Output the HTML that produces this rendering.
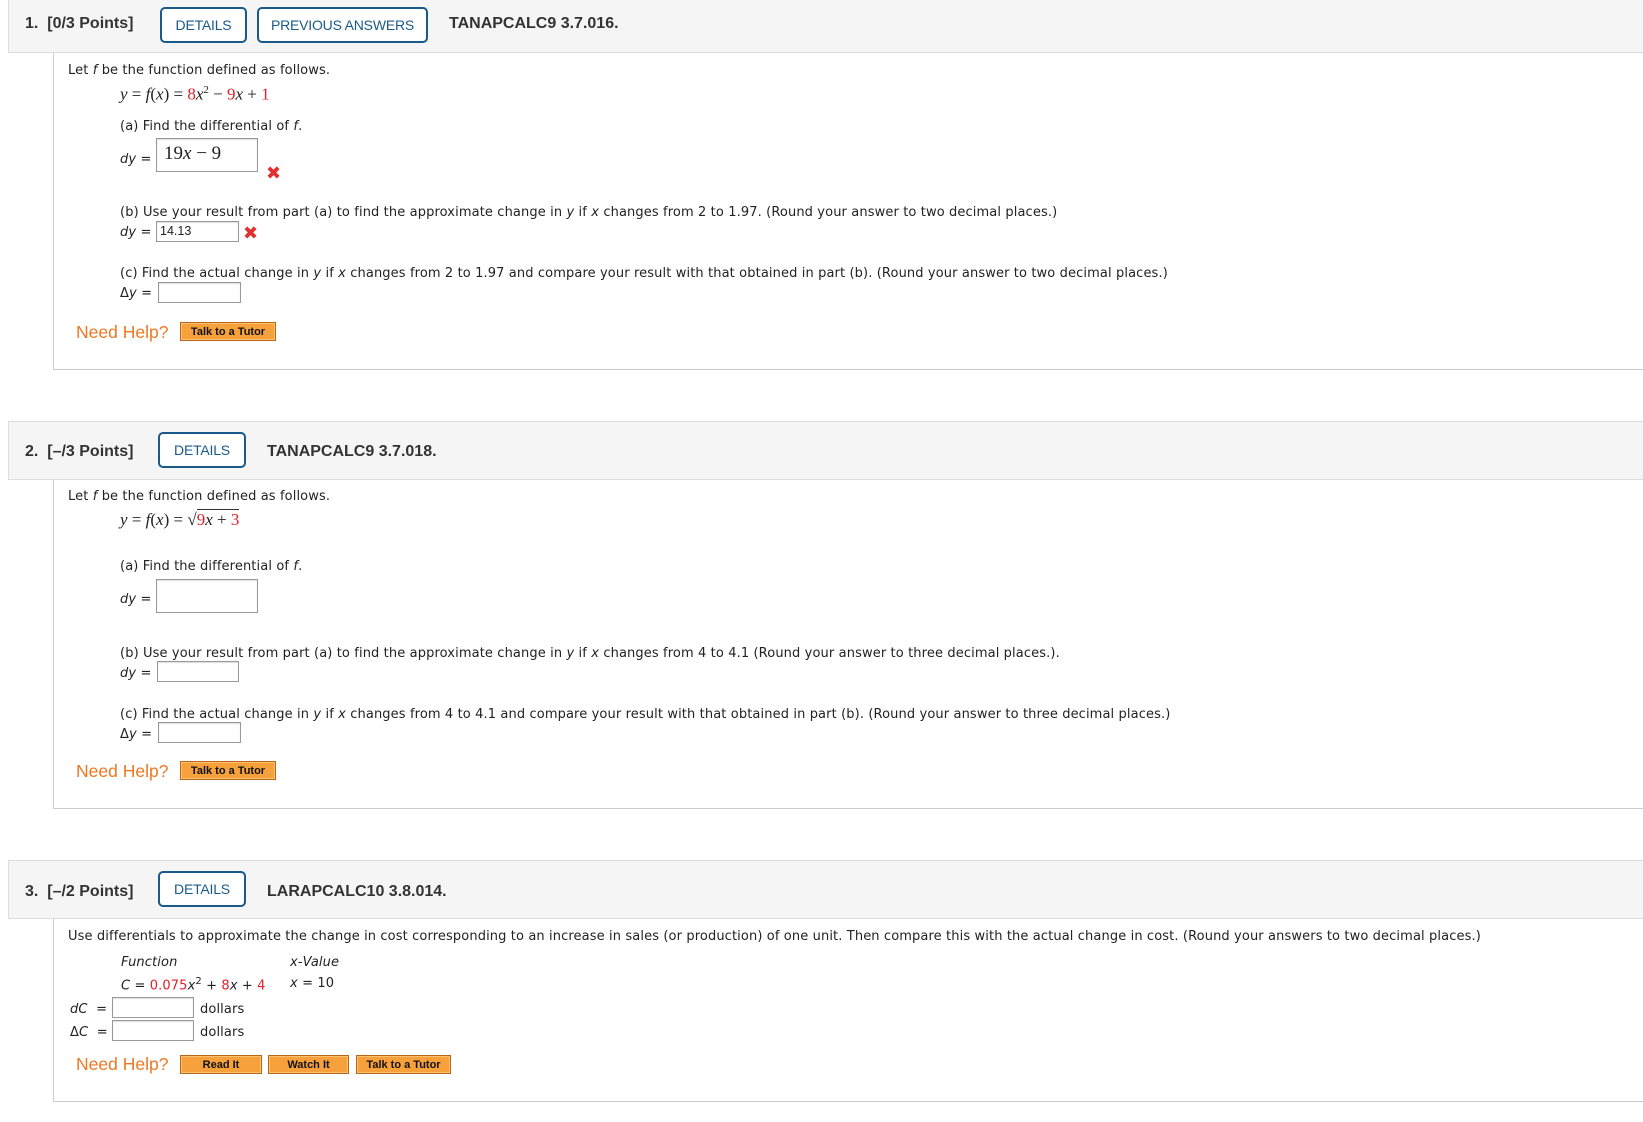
<!DOCTYPE html>
<html><head><meta charset="utf-8"><style>
*{margin:0;padding:0;box-sizing:border-box}
body{width:1643px;height:1122px;background:#fff;position:relative;overflow:hidden;font-family:"DejaVu Sans","Liberation Sans",sans-serif;font-size:13px;color:#222;letter-spacing:.12px}
.a{position:absolute;white-space:nowrap;margin-top:2px}
.hdr{position:absolute;left:8px;right:-10px;background:#f5f5f5;border:1px solid #ddd}
.body{position:absolute;left:53px;right:-10px;border-left:1px solid #ccc;border-bottom:1px solid #ccc}
.ht{position:absolute;font-family:"Liberation Sans",sans-serif;font-weight:bold;font-size:16px;color:#333;white-space:nowrap;letter-spacing:0}
.btn{position:absolute;border:2px solid #1a5a8a;border-radius:5px;background:#fff;color:#1a5a8a;font-family:"Liberation Sans",sans-serif;font-size:14px;display:flex;align-items:center;justify-content:center;letter-spacing:-.2px}
.in{position:absolute;border:1px solid #999;background:#fff;box-shadow:inset 0 1px 1px #ddd}
.m{font-family:"Liberation Serif",serif;font-size:17px;font-style:italic;letter-spacing:0}
.r{color:#e0202a;font-style:normal}
.n{font-style:normal}
.x{position:absolute;color:#e03030;font-size:18px;font-weight:bold;font-family:"DejaVu Sans",sans-serif;line-height:1}
.nh{position:absolute;color:#ee7722;font-family:"Liberation Sans",sans-serif;font-size:17.5px;white-space:nowrap;letter-spacing:0}
.tb{position:absolute;height:19px;background:#f7a13c;border:1px solid #b8661a;box-shadow:inset 0 0 0 1px #ffc070;font-family:"Liberation Sans",sans-serif;font-weight:bold;font-size:11px;color:#111;display:flex;align-items:center;justify-content:center;letter-spacing:0}
i{font-style:italic}
</style></head><body>

<!-- Q1 -->
<div class="hdr" style="top:-2px;height:55px"></div>
<div class="ht" style="left:25px;top:15px">1.&nbsp; [0/3 Points]</div>
<div class="btn" style="left:160px;top:7px;width:87px;height:36px">DETAILS</div>
<div class="btn" style="left:257px;top:7px;width:171px;height:36px">PREVIOUS ANSWERS</div>
<div class="ht" style="left:449px;top:15px">TANAPCALC9 3.7.016.</div>
<div class="body" style="top:53px;height:317px"></div>
<div class="a" style="left:68px;top:61px">Let <i>f</i> be the function defined as follows.</div>
<div class="a m" style="left:120px;top:82px">y <span class="n">=</span> f<span class="n">(</span>x<span class="n">)</span> <span class="n">=</span> <span class="r">8</span>x<sup style="font-size:11px;font-style:normal">2</sup> <span class="n">−</span> <span class="r">9</span>x <span class="n">+</span> <span class="r">1</span></div>
<div class="a" style="left:120px;top:117px">(a) Find the differential of <i>f</i>.</div>
<div class="a" style="left:120px;top:150px"><i>dy</i> =</div>
<div class="in" style="left:156px;top:138px;width:102px;height:34px"></div>
<div class="a" style="left:164px;top:141px;font-family:'Liberation Serif',serif;font-size:19px;letter-spacing:0">19<i>x</i> − 9</div>
<div class="x" style="left:266px;top:165px">✖</div>
<div class="a" style="left:120px;top:203px">(b) Use your result from part (a) to find the approximate change in <i>y</i> if <i>x</i> changes from 2 to 1.97. (Round your answer to two decimal places.)</div>
<div class="a" style="left:120px;top:223px"><i>dy</i> =</div>
<div class="in" style="left:156px;top:221px;width:83px;height:21px"></div>
<div class="a" style="left:160px;top:222px;font-family:'Liberation Sans',sans-serif;font-size:12.5px;letter-spacing:0">14.13</div>
<div class="x" style="left:243px;top:225px">✖</div>
<div class="a" style="left:120px;top:264px">(c) Find the actual change in <i>y</i> if <i>x</i> changes from 2 to 1.97 and compare your result with that obtained in part (b). (Round your answer to two decimal places.)</div>
<div class="a" style="left:120px;top:284px">Δ<i>y</i> =</div>
<div class="in" style="left:158px;top:282px;width:83px;height:21px"></div>
<div class="nh" style="left:76px;top:322px">Need Help?</div>
<div class="tb" style="left:180px;top:322px;width:96px">Talk to a Tutor</div>

<!-- Q2 -->
<div class="hdr" style="top:421px;height:59px"></div>
<div class="ht" style="left:25px;top:443px">2.&nbsp; [–/3 Points]</div>
<div class="btn" style="left:158px;top:432px;width:88px;height:36px">DETAILS</div>
<div class="ht" style="left:267px;top:443px">TANAPCALC9 3.7.018.</div>
<div class="body" style="top:480px;height:329px"></div>
<div class="a" style="left:68px;top:487px">Let <i>f</i> be the function defined as follows.</div>
<div class="a m" style="left:120px;top:508px">y <span class="n">=</span> f<span class="n">(</span>x<span class="n">)</span> <span class="n">=</span> <span class="n">√</span><span style="border-top:1px solid #333"><span class="r">9</span>x <span class="n">+</span> <span class="r">3</span></span></div>
<div class="a" style="left:120px;top:557px">(a) Find the differential of <i>f</i>.</div>
<div class="a" style="left:120px;top:590px"><i>dy</i> =</div>
<div class="in" style="left:156px;top:579px;width:102px;height:34px"></div>
<div class="a" style="left:120px;top:644px">(b) Use your result from part (a) to find the approximate change in <i>y</i> if <i>x</i> changes from 4 to 4.1 (Round your answer to three decimal places.).</div>
<div class="a" style="left:120px;top:664px"><i>dy</i> =</div>
<div class="in" style="left:157px;top:661px;width:82px;height:21px"></div>
<div class="a" style="left:120px;top:705px">(c) Find the actual change in <i>y</i> if <i>x</i> changes from 4 to 4.1 and compare your result with that obtained in part (b). (Round your answer to three decimal places.)</div>
<div class="a" style="left:120px;top:725px">Δ<i>y</i> =</div>
<div class="in" style="left:158px;top:722px;width:83px;height:21px"></div>
<div class="nh" style="left:76px;top:761px">Need Help?</div>
<div class="tb" style="left:180px;top:761px;width:96px">Talk to a Tutor</div>

<!-- Q3 -->
<div class="hdr" style="top:860px;height:59px"></div>
<div class="ht" style="left:25px;top:883px">3.&nbsp; [–/2 Points]</div>
<div class="btn" style="left:158px;top:871px;width:88px;height:36px">DETAILS</div>
<div class="ht" style="left:267px;top:883px">LARAPCALC10 3.8.014.</div>
<div class="body" style="top:919px;height:183px"></div>
<div class="a" style="left:68px;top:927px">Use differentials to approximate the change in cost corresponding to an increase in sales (or production) of one unit. Then compare this with the actual change in cost. (Round your answers to two decimal places.)</div>
<div class="a" style="left:121px;top:953px"><i>Function</i></div>
<div class="a" style="left:290px;top:953px"><i>x</i>-<i>Value</i></div>
<div class="a" style="left:121px;top:974px"><i>C</i> = <span style="color:#e0202a">0.075</span><i>x</i><sup style="font-size:10px">2</sup> + <span style="color:#e0202a">8</span><i>x</i> + <span style="color:#e0202a">4</span></div>
<div class="a" style="left:290px;top:974px"><i>x</i> = 10</div>
<div class="a" style="left:70px;top:1000px"><i>dC</i> &nbsp;=</div>
<div class="in" style="left:112px;top:997px;width:82px;height:21px"></div>
<div class="a" style="left:200px;top:1000px">dollars</div>
<div class="a" style="left:70px;top:1023px">Δ<i>C</i> &nbsp;=</div>
<div class="in" style="left:112px;top:1020px;width:82px;height:21px"></div>
<div class="a" style="left:200px;top:1023px">dollars</div>
<div class="nh" style="left:76px;top:1054px">Need Help?</div>
<div class="tb" style="left:180px;top:1055px;width:82px">Read It</div>
<div class="tb" style="left:268px;top:1055px;width:81px">Watch It</div>
<div class="tb" style="left:356px;top:1055px;width:95px">Talk to a Tutor</div>
</body></html>
